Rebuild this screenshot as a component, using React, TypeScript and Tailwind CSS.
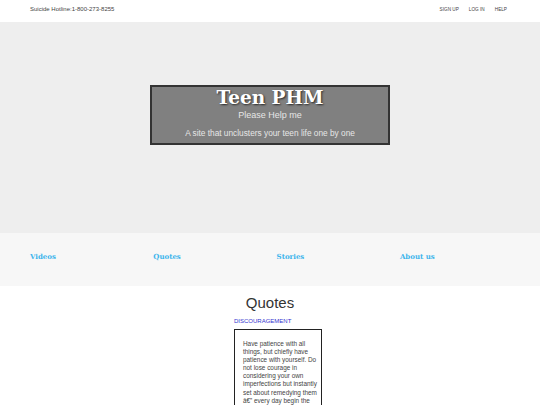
import React from "react";

const quoteLines = [
  "Have patience with all",
  "things, but chiefly have",
  "patience with yourself. Do",
  "not lose courage in",
  "considering your own",
  "imperfections but instantly",
  "set about remedying them",
  "â€” every day begin the",
  "task anew.",
];

export default function App() {
  const sans = { fontFamily: '"Liberation Sans", Arial, sans-serif' };
  const slab = { fontFamily: '"DejaVu Serif", serif' };
  return (
    <div className="w-[540px] min-h-[405px] bg-white text-[#333]" style={sans}>
      <header className="h-[22px] flex items-start justify-between pl-[30px] pr-[33px] pt-[6px]">
        <div className="text-[6px] leading-[6px] text-[#444]">Suicide Hotline:1-800-273-8255</div>
        <nav className="flex gap-[10px] text-[4.7px] leading-[6px] pt-[1px] text-[#444]">
          <span>SIGN UP</span>
          <span>LOG IN</span>
          <span>HELP</span>
        </nav>
      </header>
      <section className="h-[211px] bg-[#eeeeee] flex flex-col items-center pt-[63px]">
        <div className="w-[240px] h-[60px] bg-[#808080] border-2 border-[#333] flex flex-col items-center">
          <h1
            className="text-[18.5px] leading-[22px] font-bold text-white"
            style={{ ...slab, textShadow: "1px 1px 2px rgba(0,0,0,0.7)" }}
          >
            Teen PHM
          </h1>
          <p className="text-[9px] leading-[10px] mt-[1px] text-[#e6e6e6]">Please Help me</p>
          <p className="text-[8.3px] leading-[10px] mt-[8px] text-[#e6e6e6]">
            A site that unclusters your teen life one by one
          </p>
        </div>
      </section>
      <section className="h-[53px] bg-[#f7f7f7] flex items-center pl-[30px]">
        {["Videos", "Quotes", "Stories", "About us"].map((l) => (
          <div key={l} className="w-[123.3px] text-[7px] font-bold text-[#3db5ec] leading-[10px] mt-[-5px]" style={slab}>
            {l}
          </div>
        ))}
      </section>
      <section className="flex flex-col items-center">
        <h2 className="text-[15px] leading-[18px] mt-[8px] text-[#333]">Quotes</h2>
        <div className="w-[88px] ml-[16px]">
          <div className="text-[6px] leading-[8px] mt-[5px] text-[#3535d0]">DISCOURAGEMENT</div>
          <div className="mt-[4px] border border-[#222] pl-[8px] pt-[10px] pb-[8px] text-[6.4px] leading-[8.1px] text-[#444]">
            {quoteLines.map((l) => (
              <div key={l} className="whitespace-nowrap">{l}</div>
            ))}
          </div>
        </div>
      </section>
    </div>
  );
}
